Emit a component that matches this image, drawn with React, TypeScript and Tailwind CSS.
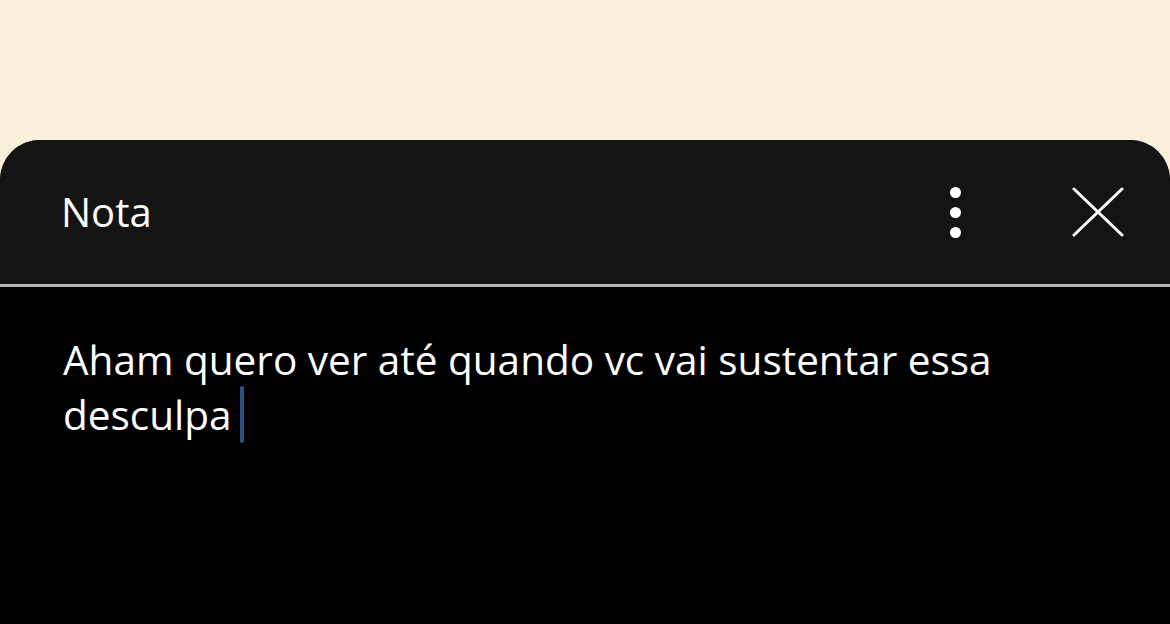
export default function App() {
  return (
    <div
      className="w-[1170px] h-[624px] flex flex-col bg-[#f9f0dc] overflow-hidden"
      style={{ fontFamily: '"Open Sans", "Noto Sans", sans-serif' }}
    >
      <div className="h-[140px] shrink-0" />
      <div className="flex-1 flex flex-col rounded-t-[40px] overflow-hidden bg-black">
        {/* Header */}
        <div className="h-[144px] shrink-0 flex items-center bg-[#141414] pl-[61px] pr-[46px]">
          <span className="text-white text-[40px] leading-none">Nota</span>
          <div className="flex-1" />
          <div className="flex flex-col gap-[9px] items-center">
            <span className="w-[11px] h-[11px] rounded-full bg-white" />
            <span className="w-[11px] h-[11px] rounded-full bg-white" />
            <span className="w-[11px] h-[11px] rounded-full bg-white" />
          </div>
          <svg
            className="ml-[111px]"
            width="52"
            height="50"
            viewBox="0 0 52 50"
            fill="none"
            stroke="white"
            strokeWidth="3"
            strokeLinecap="round"
          >
            <path d="M2 2 L50 48 M50 2 L2 48" />
          </svg>
        </div>
        <div className="h-[3px] shrink-0 bg-[#b3b3b3]" />
        {/* Body */}
        <div className="flex-1 bg-black pl-[63px] pr-[40px] pt-[46px]">
          <p className="text-white text-[40.5px] leading-[53px]">
            Aham quero ver até quando vc vai sustentar essa
            <br />
            desculpa
            <span className="inline-block align-[-13px] ml-[8px] w-[4px] h-[57px] rounded-full bg-[#2c4f86]" />
          </p>
        </div>
      </div>
    </div>
  );
}
